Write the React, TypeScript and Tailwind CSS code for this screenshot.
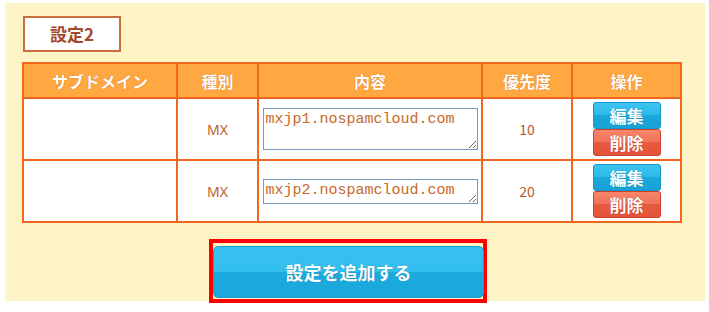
import React from "react";

const jp = { fontFamily: '"Noto Sans CJK JP", "Noto Sans", sans-serif' };

function EditButtons() {
  return (
    <div className="flex flex-col items-center">
      <div
        className="w-[68px] h-[27px] rounded-[3px] border border-[#1a97c9] bg-[linear-gradient(#3cc5f1_0%,#2db8ea_50%,#1ba7dc_50%,#19a2d8_100%)] text-white font-bold text-[17px] leading-[25px] text-center"
        style={{ ...jp, textShadow: "0 0 1px #0b6f99" }}
      >
        編集
      </div>
      <div
        className="w-[68px] h-[27px] rounded-[3px] border border-[#c9432b] bg-[linear-gradient(#f7866a_0%,#f2725a_50%,#e85a40_50%,#e4533a_100%)] text-white font-bold text-[17px] leading-[25px] text-center"
        style={{ ...jp, textShadow: "0 0 1px #a0301c" }}
      >
        削除
      </div>
    </div>
  );
}

export default function App() {
  const rows = [
    { type: "MX", value: "mxjp1.nospamcloud.com", pri: "10", tall: true },
    { type: "MX", value: "mxjp2.nospamcloud.com", pri: "20", tall: false },
  ];
  return (
    <div className="w-[709px] h-[312px] bg-white pt-[3px] pl-[5px]">
      <div className="w-[700px] h-[298px] bg-[#fef4c6] pl-[17px] pt-[13px]">
        <div
          className="ml-px w-[98px] h-[36px] border-2 border-[#c8703f] bg-white flex items-center justify-center text-[17px] font-bold text-[#a4472a]"
          style={jp}
        >
          設定2
        </div>
        <table className="mt-[10px] border-collapse" style={jp}>
          <thead>
            <tr className="bg-[#ffa741] h-[35px]">
              {[
                ["サブドメイン", "w-[154px]"],
                ["種別", "w-[81px]"],
                ["内容", "w-[224px]"],
                ["優先度", "w-[90px]"],
                ["操作", "w-[109px]"],
              ].map(([t, w]) => (
                <th
                  key={t}
                  className={`${w} border-2 border-[#f2661d] text-white font-bold text-[16px] p-0`}
                  style={{ textShadow: "0 0 1px #c8621a" }}
                >
                  {t}
                </th>
              ))}
            </tr>
          </thead>
          <tbody>
            {rows.map((r) => (
              <tr key={r.value} className="bg-white h-[62px]">
                <td className="border-2 border-[#f2661d] p-0"></td>
                <td
                  className="border-2 border-[#f2661d] p-0 text-center text-[14px] text-[#bb612d]"
                  style={{ fontFamily: '"Noto Sans", sans-serif' }}
                >
                  {r.type}
                </td>
                <td className="border-2 border-[#f2661d] p-0">
                  <div className="flex items-center justify-center">
                    <textarea
                      readOnly
                      defaultValue={r.value}
                      className={`block w-[215px] ${r.tall ? "h-[42px]" : "h-[25px]"} border border-[#7f98bf] bg-white px-[2px] pt-[1px] text-[15px] leading-[19px] text-[#c66a2c] outline-none overflow-hidden`}
                      style={{ fontFamily: '"Liberation Mono", monospace' }}
                    />
                  </div>
                </td>
                <td className="border-2 border-[#f2661d] p-0 text-center text-[14px] text-[#b85a2a]">
                  {r.pri}
                </td>
                <td className="border-2 border-[#f2661d] p-0">
                  <EditButtons />
                </td>
              </tr>
            ))}
          </tbody>
        </table>
        <div className="mt-[16px] ml-[187px] w-[278px] h-[64px] border-4 border-[#ff0000] pt-[3px]">
          <div
            className="w-[271px] h-[52px] rounded-[5px] border border-[#1b9ccf] bg-[linear-gradient(#36c1ef_0%,#33bfee_50%,#1cabdf_50%,#1aa8dc_100%)] flex items-center justify-center text-white font-bold text-[18px]"
            style={{ ...jp, textShadow: "0 0 1px #0d75a0" }}
          >
            設定を追加する
          </div>
        </div>
      </div>
    </div>
  );
}
